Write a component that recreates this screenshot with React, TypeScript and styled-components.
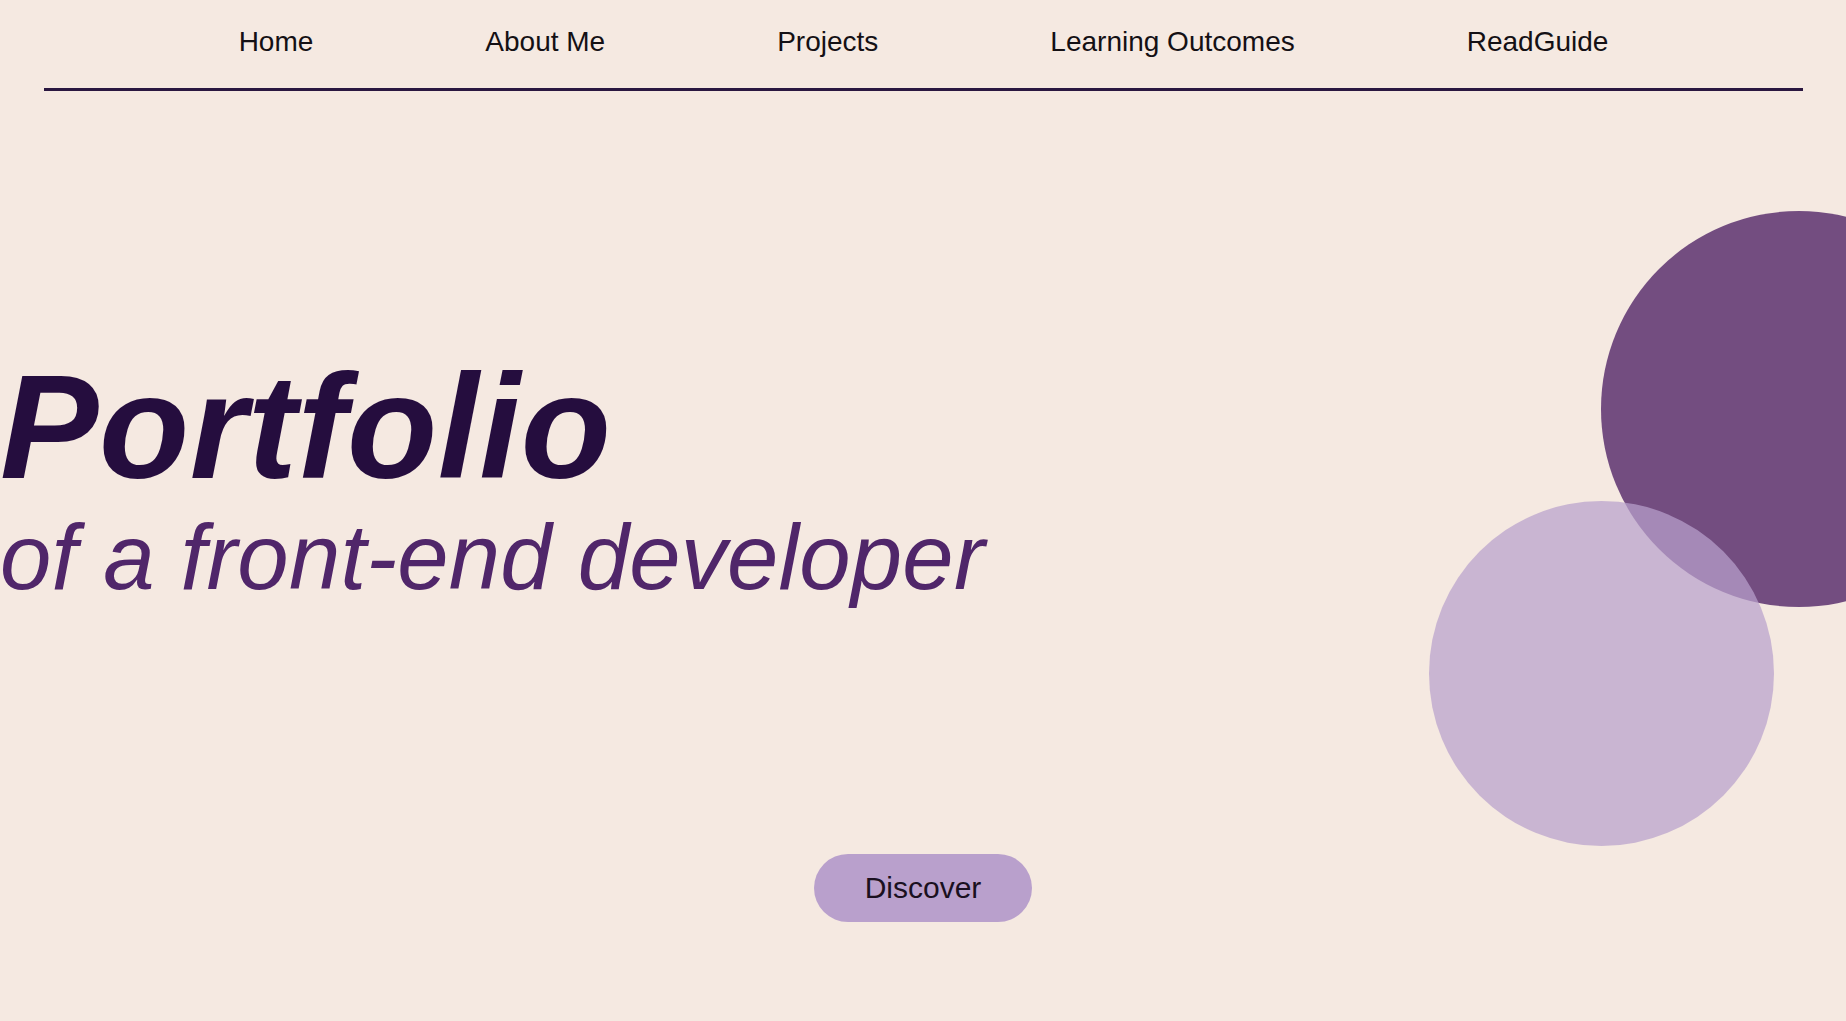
import React from "react";
import styled, { createGlobalStyle } from "styled-components";

const GlobalStyle = createGlobalStyle`
  html, body {
    margin: 0;
    padding: 0;
    background: #f5e9e1;
  }
  body {
    font-family: "Liberation Sans", Arial, sans-serif;
    overflow: hidden;
  }
  * { box-sizing: border-box; }
`;

const Page = styled.div`
  position: relative;
  width: 100%;
  height: 1021px;
  overflow: hidden;
  background: #f5e9e1;
`;

const Nav = styled.nav`
  margin: 0 43px 0 44px;
  border-bottom: 3px solid #2a1740;
`;

const NavList = styled.ul`
  list-style: none;
  margin: 0;
  padding: 26px 0 30px;
  display: flex;
  justify-content: center;
  gap: 172px;
`;

const NavItem = styled.li`
  font-size: 28px;
  line-height: 32px;
  color: #141014;
  white-space: nowrap;
  cursor: pointer;
`;

const Hero = styled.section`
  display: flex;
  flex-direction: column;
`;

const Title = styled.h1`
  margin: 262px 0 0;
  font-size: 147.7px;
  line-height: 1;
  font-weight: 700;
  font-style: italic;
  color: #250d3e;
  letter-spacing: 0.5px;
`;

const Subtitle = styled.h2`
  margin: 10px 0 0;
  font-size: 92.3px;
  line-height: 1;
  font-weight: 400;
  font-style: italic;
  color: #50266a;
  letter-spacing: 0.2px;
  white-space: nowrap;
`;

const ButtonRow = styled.div`
  display: flex;
  justify-content: center;
  margin-top: 251px;
`;

const DiscoverButton = styled.button`
  height: 68px;
  padding: 0 51px;
  border: none;
  border-radius: 34px;
  background: #b9a0cc;
  color: #1a1020;
  font-family: "Liberation Sans", Arial, sans-serif;
  font-size: 30px;
  display: inline-flex;
  align-items: center;
  cursor: pointer;
`;

const Circle = styled.div<{ $size: number; $left: number; $top: number; $color: string }>`
  position: absolute;
  left: ${(p) => p.$left}px;
  top: ${(p) => p.$top}px;
  width: ${(p) => p.$size}px;
  height: ${(p) => p.$size}px;
  border-radius: 50%;
  background: ${(p) => p.$color};
  pointer-events: none;
`;

const links = ["Home", "About Me", "Projects", "Learning Outcomes", "ReadGuide"];

export default function App() {
  return (
    <>
      <GlobalStyle />
      <Page>
        <Nav>
          <NavList>
            {links.map((l) => (
              <NavItem key={l}>{l}</NavItem>
            ))}
          </NavList>
        </Nav>
        <Hero>
          <Title>Portfolio</Title>
          <Subtitle>of a front-end developer</Subtitle>
          <ButtonRow>
            <DiscoverButton>Discover</DiscoverButton>
          </ButtonRow>
        </Hero>
        <Circle $size={396} $left={1601} $top={211} $color="#734d80" />
        <Circle $size={345} $left={1429} $top={501} $color="rgba(185, 161, 204, 0.72)" />
      </Page>
    </>
  );
}
